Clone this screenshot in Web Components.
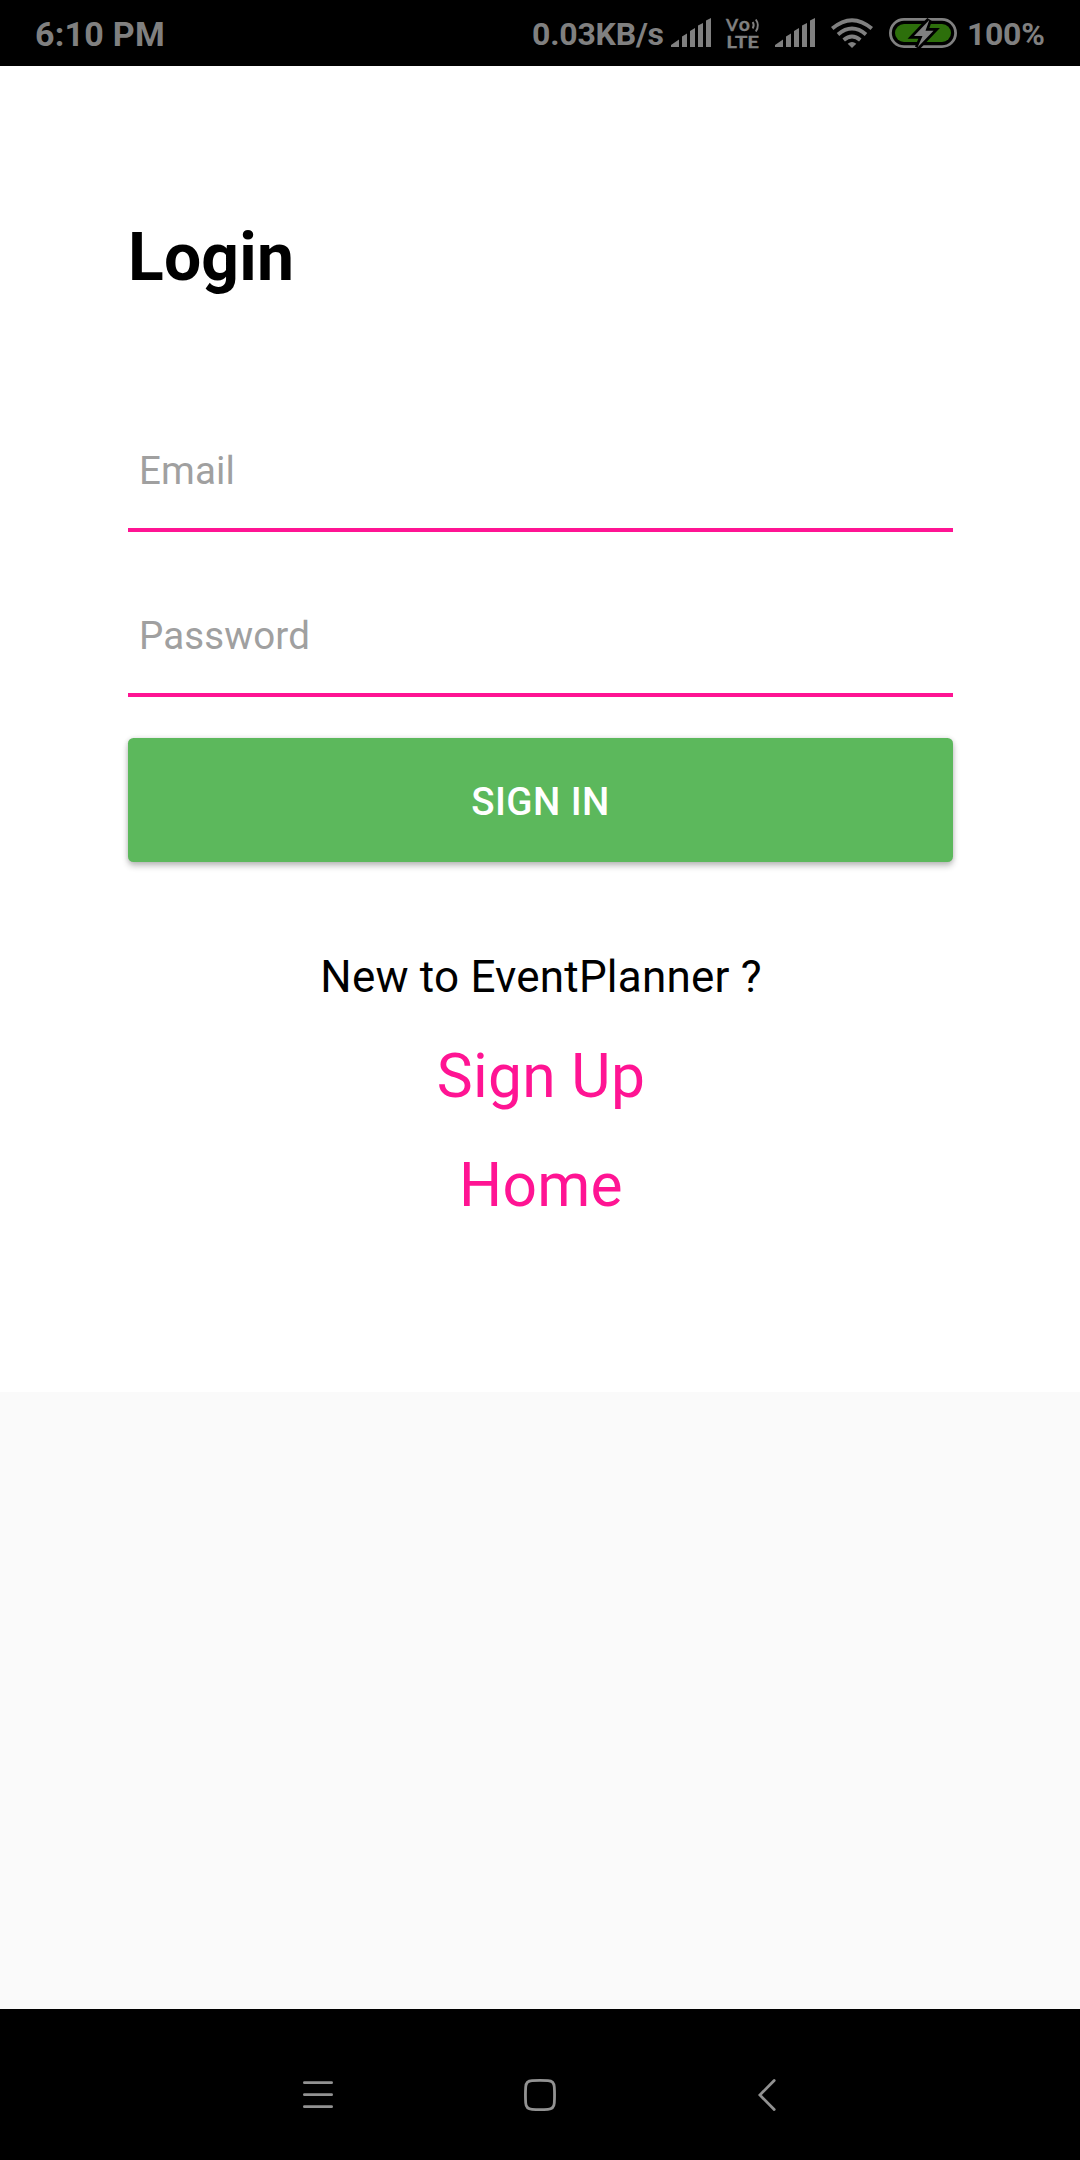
<!DOCTYPE html>
<html lang="en">
<head>
<meta charset="utf-8">
<title>Login</title>
<style>
html,body{margin:0;padding:0;background:#fafafa}
body{font-family:Roboto,"Liberation Sans",sans-serif}
</style>
</head>
<body>
<login-app></login-app>
<script>
function component(name, html) {
  const template = document.createElement('template');
  template.innerHTML = html;
  customElements.define(name, class extends HTMLElement {
    constructor() {
      super();
      this.attachShadow({ mode: 'open' }).append(template.content.cloneNode(true));
    }
  });
}

component('signal-icon', `
<style>:host{display:block;width:40px;height:30px}svg{display:block}</style>
<svg width="40" height="30" viewBox="0 0 40 30" fill="#808080">
  <path d="M0 29V27L8 21.5V29ZM11 29V18.5L16 15.5V29ZM19 29V13L24 10V29ZM27 29V7.5L32 5V29ZM35 29V2.5L40 0V29Z"/>
</svg>`);

component('volte-icon', `
<style>:host{display:block;width:34px;height:31px}svg{display:block;overflow:visible}
text{font-family:Lato,sans-serif;font-weight:700;fill:#808080;stroke:#808080;stroke-width:.3px}</style>
<svg width="34" height="31" viewBox="0 0 34 31">
  <text x="0" y="12.500" font-size="17.500">V<tspan x="12.800" font-size="19.500">o</tspan></text>
  <text x="0.200" y="29.700" font-size="17.500" textLength="33" lengthAdjust="spacingAndGlyphs">LTE</text>
  <path d="M26.700 4Q28.700 7.200 26.700 10.500M29.800 1.500Q34 7.300 29.800 13.500" fill="none" stroke="#808080" stroke-width="1.900"/>
</svg>`);

component('wifi-icon', `
<style>:host{display:block;width:42px;height:30px}svg{display:block}</style>
<svg width="42" height="30" viewBox="0 0 42 30" fill="none" stroke="#808080" stroke-width="3.900">
  <path d="M1.200 10.500Q21 -6.200 40.800 10.500M7 16.400Q21 4.600 35 16.400M12.700 21.900Q21 15 29.300 21.900"/>
  <path d="M16.700 25.800Q21 22.300 25.300 25.800L21 30Z" fill="#808080" stroke="none"/>
</svg>`);

component('battery-icon', `
<style>:host{display:block;width:68px;height:30px}svg{display:block}</style>
<svg width="68" height="30" viewBox="0 0 68 30">
  <rect x="1.400" y="1.400" width="65.200" height="27.200" rx="13.600" fill="none" stroke="#808080" stroke-width="2.800"/>
  <rect x="6" y="6" width="56" height="18" rx="9" fill="#2d6f0b"/>
  <path d="M40.300 2L25 18H33.500L28.500 29.500L44.500 12.700H36.500Z" fill="#808080" stroke="#000" stroke-width="5.500" paint-order="stroke"/>
</svg>`);

component('status-bar', `
<style>
:host{display:flex;box-sizing:border-box;height:66px;background:#000;color:#808080;font-weight:700;padding:0 36px 0 35px;justify-content:space-between;align-items:flex-start}
.time{font-size:34px;line-height:40px;padding-top:14px;white-space:nowrap;letter-spacing:.25px}
.right{display:flex;align-items:flex-start;padding-top:18px}
.txt{font-size:32px;line-height:38px;margin-top:-3px;white-space:nowrap}
.speed{width:139px;letter-spacing:-.2px}
.pct{width:77px;letter-spacing:-.3px}
volte-icon{margin:0 15px}
wifi-icon{margin:0 16px}
battery-icon{margin-right:10px}
</style>
<span class="time">6:10 PM</span>
<div class="right">
  <span class="txt speed">0.03KB/s</span>
  <signal-icon></signal-icon><volte-icon></volte-icon><signal-icon></signal-icon>
  <wifi-icon></wifi-icon><battery-icon></battery-icon>
  <span class="txt pct">100%</span>
</div>`);

component('line-field', `
<style>
:host{display:block;box-sizing:border-box;height:118px;border-bottom:4px solid #ff1493;padding-left:11px;font-size:38.500px;line-height:114px;letter-spacing:.12px;color:#a0a0a0}
</style><slot></slot>`);

component('action-button', `
<style>
:host{display:block}
button{display:block;width:100%;height:124px;border:0;margin:0;padding:4px 0 0;border-radius:5.500px;background:#5cb85c;color:#fff;font:500 38.500px/120px Roboto,sans-serif;letter-spacing:.4px;box-shadow:0 4px 6px rgba(0,0,0,.24),0 0 5px rgba(0,0,0,.12)}
</style><button><slot></slot></button>`);

component('login-form', `
<style>
:host{display:block;box-sizing:border-box;height:1326px;background:#fff;padding:153px 127px 0 128px}
h1{margin:0 0 117px;font-size:66px;line-height:78px;font-weight:700;letter-spacing:.2px;color:#000}
line-field + line-field{margin-top:47px}
action-button{margin-top:41px}
p{margin:89px 0 0;padding-left:1px;font-size:44px;line-height:52px;letter-spacing:.2px;text-align:center;color:#000}
nav{display:flex;flex-direction:column;align-items:center;gap:37px;margin-top:38px;padding-left:1px}
nav a{font-size:60.500px;line-height:72px;letter-spacing:.3px;color:#ff1493}
</style>
<h1>Login</h1>
<line-field>Email</line-field>
<line-field>Password</line-field>
<action-button>SIGN IN</action-button>
<p>New to EventPlanner ?</p>
<nav><a>Sign Up</a><a>Home</a></nav>`);

component('nav-bar', `
<style>
:host{display:flex;box-sizing:border-box;height:151px;background:#000;padding:70px 303px 0}
svg{display:block}
.home{margin:0 202px 0 191px}
</style>
<svg width="30" height="32" viewBox="0 0 30 32" fill="none" stroke="#929292" stroke-width="2.800" stroke-linecap="round"><path d="M1.400 3.700H28.600M1.400 15.700H28.600M1.400 27.700H28.600"/></svg>
<svg class="home" width="32" height="32" viewBox="0 0 32 32" fill="none" stroke="#929292" stroke-width="2.800"><path d="M8 1.700Q16 1.200 24 1.700Q30 2 30.300 8Q30.800 16 30.300 24Q30 30 24 30.300Q16 30.800 8 30.300Q2 30 1.700 24Q1.200 16 1.700 8Q2 2 8 1.700Z"/></svg>
<svg width="18" height="32" viewBox="0 0 18 32" fill="none" stroke="#929292" stroke-width="2.800" stroke-linecap="round"><path d="M16.200 1.500L1.900 16L16.200 30.500"/></svg>`);

component('login-app', `
<style>
:host{display:flex;flex-direction:column;width:1080px;height:2160px;background:#fafafa;overflow:hidden}
nav-bar{margin-top:auto}
</style>
<status-bar></status-bar>
<login-form></login-form>
<nav-bar></nav-bar>`);
</script>
</body>
</html>
